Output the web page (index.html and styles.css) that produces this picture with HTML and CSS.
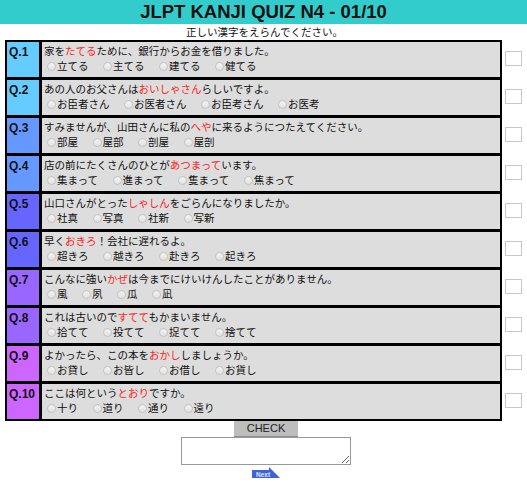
FILE: index.html
```html
<!DOCTYPE html>
<html lang="ja">
<head>
<meta charset="utf-8">
<title>JLPT KANJI QUIZ N4 - 01/10</title>
<link rel="stylesheet" href="styles.css">
</head>
<body>
<header class="top">JLPT KANJI QUIZ N4 - 01/10</header>
<div class="sub">正しい漢字をえらんでください。</div>
<div class="main">
  <div class="quiz">
    <div class="lab c1">Q.1</div>
    <div class="q"><div class="qt">家を<span class="hl">たてる</span>ために、銀行からお金を借りました。</div>
      <div class="opts"><label><span class="rb"></span>立てる</label><label><span class="rb"></span>主てる</label><label><span class="rb"></span>建てる</label><label><span class="rb"></span>健てる</label></div></div>

    <div class="lab c1">Q.2</div>
    <div class="q"><div class="qt">あの人のお父さんは<span class="hl">おいしゃさん</span>らしいですよ。</div>
      <div class="opts"><label><span class="rb"></span>お臣者さん</label><label><span class="rb"></span>お医者さん</label><label><span class="rb"></span>お臣考さん</label><label><span class="rb"></span>お医考</label></div></div>

    <div class="lab c2">Q.3</div>
    <div class="q"><div class="qt">すみませんが、山田さんに私の<span class="hl">へや</span>に来るようにつたえてください。</div>
      <div class="opts"><label><span class="rb"></span>部屋</label><label><span class="rb"></span>屋部</label><label><span class="rb"></span>剖屋</label><label><span class="rb"></span>屋剖</label></div></div>

    <div class="lab c2">Q.4</div>
    <div class="q"><div class="qt">店の前にたくさんのひとが<span class="hl">あつまって</span>います。</div>
      <div class="opts"><label><span class="rb"></span>集まって</label><label><span class="rb"></span>進まって</label><label><span class="rb"></span>隻まって</label><label><span class="rb"></span>焦まって</label></div></div>

    <div class="lab c3">Q.5</div>
    <div class="q"><div class="qt">山口さんがとった<span class="hl">しゃしん</span>をごらんになりましたか。</div>
      <div class="opts"><label><span class="rb"></span>社真</label><label><span class="rb"></span>写真</label><label><span class="rb"></span>社新</label><label><span class="rb"></span>写新</label></div></div>

    <div class="lab c3">Q.6</div>
    <div class="q"><div class="qt">早く<span class="hl">おきろ</span>！会社に遅れるよ。</div>
      <div class="opts"><label><span class="rb"></span>超きろ</label><label><span class="rb"></span>越きろ</label><label><span class="rb"></span>赴きろ</label><label><span class="rb"></span>起きろ</label></div></div>

    <div class="lab c4">Q.7</div>
    <div class="q"><div class="qt">こんなに強い<span class="hl">かぜ</span>は今までにけいけんしたことがありません。</div>
      <div class="opts"><label><span class="rb"></span>風</label><label><span class="rb"></span>夙</label><label><span class="rb"></span>瓜</label><label><span class="rb"></span>凪</label></div></div>

    <div class="lab c4">Q.8</div>
    <div class="q"><div class="qt">これは古いので<span class="hl">すてて</span>もかまいません。</div>
      <div class="opts"><label><span class="rb"></span>拾てて</label><label><span class="rb"></span>投てて</label><label><span class="rb"></span>捉てて</label><label><span class="rb"></span>捨てて</label></div></div>

    <div class="lab c5">Q.9</div>
    <div class="q"><div class="qt">よかったら、この本を<span class="hl">おかし</span>しましょうか。</div>
      <div class="opts"><label><span class="rb"></span>お貸し</label><label><span class="rb"></span>お皆し</label><label><span class="rb"></span>お借し</label><label><span class="rb"></span>お貨し</label></div></div>

    <div class="lab c5">Q.10</div>
    <div class="q"><div class="qt">ここは何という<span class="hl">とおり</span>ですか。</div>
      <div class="opts"><label><span class="rb"></span>十り</label><label><span class="rb"></span>道り</label><label><span class="rb"></span>通り</label><label><span class="rb"></span>遠り</label></div></div>
  </div>
  <div class="checks">
    <div class="ck"><span class="box"></span></div>
    <div class="ck"><span class="box"></span></div>
    <div class="ck"><span class="box"></span></div>
    <div class="ck"><span class="box"></span></div>
    <div class="ck"><span class="box"></span></div>
    <div class="ck"><span class="box"></span></div>
    <div class="ck"><span class="box"></span></div>
    <div class="ck"><span class="box"></span></div>
    <div class="ck"><span class="box"></span></div>
    <div class="ck"><span class="box"></span></div>
  </div>
</div>
<div class="bottom">
  <div class="btn">CHECK</div>
  <textarea class="ans"></textarea>
  <svg class="next" width="28" height="11" viewBox="0 0 28 11">
    <rect x="0" y="3" width="19" height="8" fill="#3d63d8"/>
    <polygon points="17,0 28,11 17,11" fill="#3d63d8"/>
    <text x="4" y="10" font-family="Liberation Sans, sans-serif" font-size="6.5" font-weight="bold" fill="#dfe6ff">Next</text>
  </svg>
</div>
</body>
</html>
```

FILE: styles.css
```css
html, body {
  margin: 0;
  padding: 0;
  background: #fff;
}
body {
  font-family: "Noto Sans CJK JP", "Liberation Sans", sans-serif;
  color: #111;
  width: 527px;
}
.top {
  height: 24px;
  background: #33cccc;
  text-align: center;
  font-family: "Liberation Sans", Arial, sans-serif;
  font-weight: bold;
  font-size: 18.5px;
  line-height: 24px;
  color: #111;
}
.sub {
  height: 16px;
  line-height: 16px;
  font-size: 10.5px;
  text-align: center;
  padding-left: 2px;
}
.main {
  display: flex;
  margin-left: 5px;
}
.quiz {
  display: grid;
  grid-template-columns: 32px 458px;
  grid-auto-rows: 35px;
  gap: 3px;
  border: 2px solid #000;
  background: #000;
}
.lab {
  font-family: "Liberation Sans", Arial, sans-serif;
  font-weight: bold;
  font-size: 12px;
  line-height: 15px;
  padding: 3px 0 0 2px;
  color: #111;
}
.c1 { background: #66ccff; }
.c2 { background: #6699ff; }
.c3 { background: #6666ff; }
.c4 { background: #9966ff; }
.c5 { background: #cc66ff; }
.q {
  background: #dddddd;
  padding: 1px 2px 0 2px;
  font-size: 10.5px;
  line-height: 15px;
}
.qt {
  white-space: nowrap;
}
.hl {
  color: #ff2222;
}
.opts {
  display: flex;
  gap: 11.5px;
  white-space: nowrap;
}
.opts label {
  display: flex;
  align-items: center;
}
.rb {
  display: inline-block;
  box-sizing: border-box;
  width: 9px;
  height: 9px;
  margin: 2px 1px 0 3px;
  border: 1px solid #c2c2c2;
  border-radius: 50%;
  background: linear-gradient(#f4f4f4, #e2e2e2);
}
.checks {
  display: flex;
  flex-direction: column;
  gap: 3px;
  padding-top: 2px;
  margin-left: 3px;
}
.ck {
  height: 35px;
  display: flex;
  align-items: center;
}
.box {
  display: block;
  box-sizing: border-box;
  width: 17px;
  height: 15px;
  margin-bottom: 2px;
  border: 1px solid #c8c8c8;
  background: #fff;
}
.bottom {
  display: flex;
  flex-direction: column;
  align-items: center;
  padding-left: 5px;
}
.btn {
  box-sizing: border-box;
  width: 64px;
  height: 16px;
  background: #bdbdbd;
  border-bottom: 1px solid #8e8e8e;
  font-family: "Liberation Sans", Arial, sans-serif;
  font-size: 11px;
  line-height: 15px;
  text-align: center;
  color: #222;
}
.ans {
  display: block;
  box-sizing: border-box;
  width: 170px;
  height: 28px;
  margin: 0;
  padding: 2px;
  border: 1px solid #999;
  background: #fff;
}
.next {
  display: block;
  margin-top: 2px;
  margin-left: 0;
}
```
